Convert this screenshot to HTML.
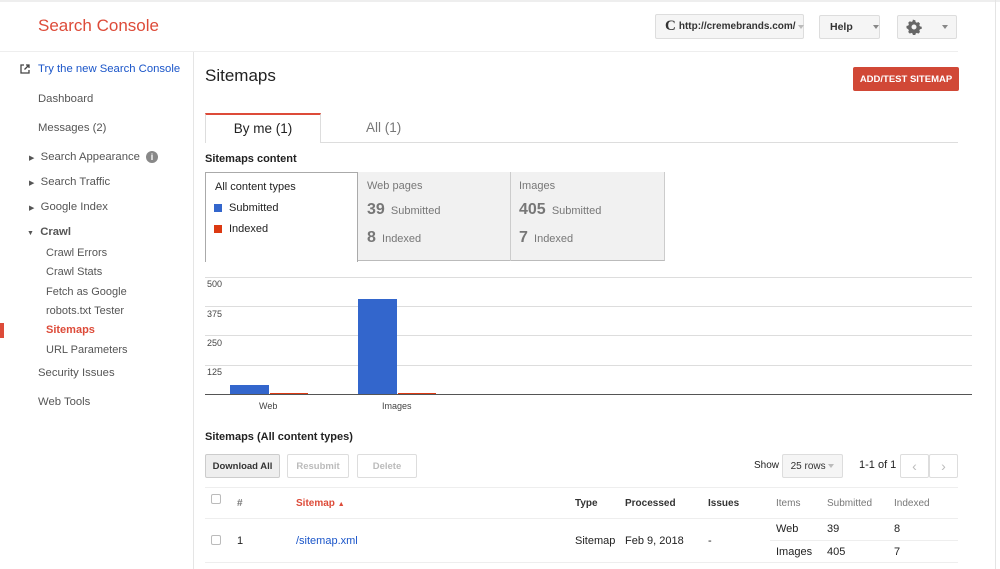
<!DOCTYPE html>
<html><head><style>
*{margin:0;padding:0;box-sizing:border-box}
body{width:1000px;height:569px;overflow:hidden;background:#fff;font-family:"Liberation Sans",Arial,sans-serif;color:#222;position:relative}
.a{position:absolute;white-space:nowrap}
.nav{font-size:11.3px;color:#555}
.btn{position:absolute;border:1px solid #ddd;background:#f5f5f5;border-radius:2px;font-size:10px;font-weight:bold;color:#333;display:flex;align-items:center;justify-content:center}
.car{display:inline-block;width:0;height:0;border-left:3px solid transparent;border-right:3px solid transparent;border-top:4px solid #888}
.grid{position:absolute;left:205px;width:767px;height:1px;background:#ddd}
.yl{position:absolute;left:207px;font-size:9px;color:#444}
.th{font-size:10px;font-weight:bold;color:#333}
</style></head><body>
<div class="a" style="left:0;top:0;width:1000px;height:2px;background:#eee"></div>
<div class="a" style="left:995px;top:0;width:1px;height:569px;background:#e4e4e4"></div>
<div class="a" style="left:38px;top:16px;font-size:17px;color:#dd4b39">Search Console</div>
<div class="btn" style="left:655px;top:14px;width:149px;height:25px;font-size:10px;justify-content:flex-start;padding-left:9px"><span style="font-family:'Liberation Serif';font-size:15px;margin-right:3px">C</span>http://cremebrands.com/&nbsp;<span class="car" style="border-top-color:#bbb"></span></div>
<div class="btn" style="left:819px;top:15px;width:61px;height:24px;justify-content:flex-start;padding-left:10px;font-size:10.5px">Help<span class="car" style="margin-left:20px"></span></div>
<div class="btn" style="left:897px;top:15px;width:60px;height:24px"><svg width="16" height="16" viewBox="0 0 16 16"><path fill="#666" d="M8 1l1.3.3.3 1.7 1.2.7 1.6-.7 1.6 1.6-.7 1.6.7 1.2 1.7.3v2.2l-1.7.3-.7 1.2.7 1.6-1.6 1.6-1.6-.7-1.2.7-.3 1.7H6.9l-.3-1.7-1.2-.7-1.6.7-1.6-1.6.7-1.6-.7-1.2L.5 9.1V6.9l1.7-.3.7-1.2-.7-1.6 1.6-1.6 1.6.7 1.2-.7.3-1.7zM8 5.5a2.5 2.5 0 100 5 2.5 2.5 0 000-5z"/></svg><span class="car" style="margin-left:20px"></span></div>
<div class="a" style="left:0;top:51px;width:958px;height:1px;background:#eee"></div>
<div class="a" style="left:193px;top:52px;width:1px;height:517px;background:#e5e5e5"></div>
<svg class="a" style="left:20px;top:64px" width="10" height="10" viewBox="0 0 10 10"><path d="M4 1H1v8h8V6M6 1h3v3M9 1L4.5 5.5" stroke="#444" stroke-width="1.3" fill="none"/></svg>
<div class="a" style="left:38px;top:63px;font-size:11.3px;color:#1a55c9">Try the new Search Console</div>
<div class="a nav" style="left:38px;top:93px">Dashboard</div>
<div class="a nav" style="left:38px;top:122px">Messages (2)</div>
<div class="a nav" style="left:29px;top:151px"><span style="font-size:7px">▶</span>&nbsp; Search Appearance <span style="display:inline-block;width:12px;height:12px;border-radius:50%;background:#888;color:#fff;font-size:9px;text-align:center;line-height:12px;font-weight:bold;margin-left:3px">i</span></div>
<div class="a nav" style="left:29px;top:176px"><span style="font-size:7px">▶</span>&nbsp; Search Traffic</div>
<div class="a nav" style="left:29px;top:201px"><span style="font-size:7px">▶</span>&nbsp; Google Index</div>
<div class="a nav" style="left:27px;top:226px;font-weight:bold"><span style="font-size:7px">▼</span>&nbsp; Crawl</div>
<div class="a nav" style="left:46px;top:247px;font-size:11px">Crawl Errors</div>
<div class="a nav" style="left:46px;top:266px;font-size:11px">Crawl Stats</div>
<div class="a nav" style="left:46px;top:286px;font-size:11px">Fetch as Google</div>
<div class="a nav" style="left:46px;top:305px;font-size:11px">robots.txt Tester</div>
<div class="a" style="left:0;top:323px;width:4px;height:15px;background:#dd4b39"></div>
<div class="a nav" style="left:46px;top:324px;font-size:11px;color:#dd4b39;font-weight:bold">Sitemaps</div>
<div class="a nav" style="left:46px;top:344px;font-size:11px">URL Parameters</div>
<div class="a nav" style="left:38px;top:367px">Security Issues</div>
<div class="a nav" style="left:38px;top:396px">Web Tools</div>

<div class="a" style="left:205px;top:66px;font-size:17px">Sitemaps</div>
<div class="a" style="left:853px;top:67px;width:106px;height:24px;background:#d14836;border-radius:2px;color:#fff;font-size:9.5px;font-weight:bold;display:flex;align-items:center;justify-content:center">ADD/TEST SITEMAP</div>
<div class="a" style="left:205px;top:142px;width:753px;height:1px;background:#ddd"></div>
<div class="a" style="left:205px;top:113px;width:116px;height:30px;border:1px solid #ddd;border-top:2px solid #dd4b39;border-bottom:none;background:#fff;font-size:13.5px;text-align:center;line-height:27px">By me (1)</div>
<div class="a" style="left:366px;top:120px;font-size:13.5px;color:#777">All (1)</div>
<div class="a" style="left:205px;top:153px;font-size:11px;font-weight:bold">Sitemaps content</div>
<div class="a" style="left:205px;top:172px;width:153px;height:90px;border:1px solid #aaa;border-bottom:none;background:#fff"></div>
<div class="a" style="left:358px;top:172px;width:307px;height:89px;background:#f1f1f1;border-bottom:1px solid #bbb;border-right:1px solid #ccc"></div>
<div class="a" style="left:510px;top:172px;width:1px;height:89px;background:#ccc"></div>
<div class="a" style="left:215px;top:181px;font-size:11px">All content types</div>
<div class="a" style="left:214px;top:204px;width:8px;height:8px;background:#3366cc"></div>
<div class="a" style="left:229px;top:202px;font-size:11px">Submitted</div>
<div class="a" style="left:214px;top:225px;width:8px;height:8px;background:#dc3912"></div>
<div class="a" style="left:229px;top:223px;font-size:11px">Indexed</div>
<div class="a" style="left:367px;top:180px;font-size:11px;color:#777">Web pages</div>
<div class="a" style="left:367px;top:201px;font-size:11px;color:#777"><b style="font-size:16px">39</b>&nbsp; Submitted</div>
<div class="a" style="left:367px;top:229px;font-size:11px;color:#777"><b style="font-size:16px">8</b>&nbsp; Indexed</div>
<div class="a" style="left:519px;top:180px;font-size:11px;color:#777">Images</div>
<div class="a" style="left:519px;top:201px;font-size:11px;color:#777"><b style="font-size:16px">405</b>&nbsp; Submitted</div>
<div class="a" style="left:519px;top:229px;font-size:11px;color:#777"><b style="font-size:16px">7</b>&nbsp; Indexed</div>

<div class="grid" style="top:277px"></div><div class="grid" style="top:306px"></div><div class="grid" style="top:335px"></div><div class="grid" style="top:365px"></div>
<div class="grid" style="top:394px;background:#555"></div>
<div class="yl" style="top:279px">500</div><div class="yl" style="top:309px">375</div><div class="yl" style="top:338px">250</div><div class="yl" style="top:367px">125</div>
<div class="a" style="left:230px;top:385px;width:39px;height:9px;background:#3366cc"></div>
<div class="a" style="left:270px;top:393px;width:38px;height:1px;background:#dc3912"></div>
<div class="a" style="left:358px;top:299px;width:39px;height:95px;background:#3366cc"></div>
<div class="a" style="left:398px;top:393px;width:38px;height:1px;background:#dc3912"></div>
<div class="a" style="left:259px;top:401px;font-size:9px;color:#444">Web</div>
<div class="a" style="left:382px;top:401px;font-size:9px;color:#444">Images</div>

<div class="a" style="left:205px;top:431px;font-size:11px;font-weight:bold">Sitemaps (All content types)</div>
<div class="btn" style="left:205px;top:454px;width:75px;height:24px;background:#eee;border-color:#ccc;font-size:9.5px">Download All</div>
<div class="btn" style="left:287px;top:454px;width:62px;height:24px;background:#fff;color:#bbb;font-size:9.5px">Resubmit</div>
<div class="btn" style="left:357px;top:454px;width:60px;height:24px;background:#fff;color:#bbb;font-size:9.5px">Delete</div>
<div class="a" style="left:754px;top:460px;font-size:10px">Show</div>
<div class="btn" style="left:782px;top:454px;width:61px;height:24px;font-weight:normal;font-size:10px">25 rows&nbsp;<span class="car" style="border-top-color:#bbb"></span></div>
<div class="a" style="left:859px;top:459px;font-size:11px">1-1 of 1</div>
<div class="btn" style="left:900px;top:454px;width:29px;height:24px;background:#fff;color:#bbb;font-weight:normal;font-size:14px">‹</div>
<div class="btn" style="left:929px;top:454px;width:29px;height:24px;background:#fff;color:#bbb;font-weight:normal;font-size:14px">›</div>
<div class="a" style="left:205px;top:487px;width:753px;height:1px;background:#eee"></div>
<div class="a" style="left:211px;top:494px;width:10px;height:10px;border:1px solid #bbb;border-radius:2px"></div>
<div class="a th" style="left:237px;top:498px;color:#777">#</div>
<div class="a th" style="left:296px;top:498px;color:#dd4b39">Sitemap <span style="font-size:7px">▲</span></div>
<div class="a th" style="left:575px;top:498px">Type</div>
<div class="a th" style="left:625px;top:498px">Processed</div>
<div class="a th" style="left:708px;top:498px">Issues</div>
<div class="a th" style="left:776px;top:498px;color:#777;font-weight:normal">Items</div>
<div class="a th" style="left:827px;top:498px;color:#777;font-weight:normal">Submitted</div>
<div class="a th" style="left:894px;top:498px;color:#777;font-weight:normal">Indexed</div>
<div class="a" style="left:205px;top:518px;width:753px;height:1px;background:#eee"></div>
<div class="a" style="left:211px;top:535px;width:10px;height:10px;border:1px solid #bbb;border-radius:2px"></div>
<div class="a" style="left:237px;top:535px;font-size:11px">1</div>
<div class="a" style="left:296px;top:535px;font-size:11px;color:#1a55c9">/sitemap.xml</div>
<div class="a" style="left:575px;top:535px;font-size:11px">Sitemap</div>
<div class="a" style="left:625px;top:535px;font-size:11px">Feb 9, 2018</div>
<div class="a" style="left:708px;top:535px;font-size:11px">-</div>
<div class="a" style="left:776px;top:523px;font-size:11px">Web</div>
<div class="a" style="left:827px;top:523px;font-size:11px">39</div>
<div class="a" style="left:894px;top:523px;font-size:11px">8</div>
<div class="a" style="left:770px;top:540px;width:188px;height:1px;background:#eee"></div>
<div class="a" style="left:776px;top:546px;font-size:11px">Images</div>
<div class="a" style="left:827px;top:546px;font-size:11px">405</div>
<div class="a" style="left:894px;top:546px;font-size:11px">7</div>
<div class="a" style="left:205px;top:562px;width:753px;height:1px;background:#eee"></div>
</body></html>
